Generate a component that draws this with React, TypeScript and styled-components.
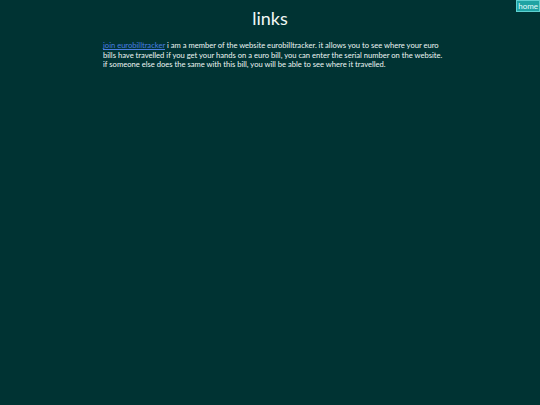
import React from "react";
import styled, { createGlobalStyle } from "styled-components";

const GlobalStyle = createGlobalStyle`
  html, body {
    margin: 0;
    padding: 0;
    background: #003333;
    height: 100%;
  }
  body {
    font-family: "Lato", "Noto Sans", sans-serif;
    color: #eef6f3;
  }
`;

const Page = styled.div`
  position: relative;
  min-height: 405px;
  padding-top: 7px;
  box-sizing: border-box;
`;

const HomeButton = styled.a`
  position: absolute;
  top: 0;
  right: 0;
  background: #1fa3a3;
  border: 1px solid #5fd0d0;
  color: #e6ffff;
  font-size: 8px;
  line-height: 10px;
  padding: 0 1px;
  text-decoration: none;
`;

const Title = styled.h1`
  margin: 0 0 12px;
  text-align: center;
  font-size: 18px;
  font-weight: 400;
  line-height: 22px;
  color: #f2f8f6;
`;

const Content = styled.div`
  width: 342px;
  margin: 0 0 0 103px;
  font-size: 7.6px;
  line-height: 9.5px;
`;

const Paragraph = styled.p`
  margin: 0;
`;

const Link = styled.a`
  color: #4a7fe0;
  text-decoration: underline;
`;

export default function App() {
  return (
    <>
      <GlobalStyle />
      <Page>
        <HomeButton href="#">home</HomeButton>
        <Title>links</Title>
        <Content>
          <Paragraph>
            <Link href="#">join eurobilltracker</Link> i am a member of the website eurobilltracker. it allows you to see where your euro bills have travelled if you get your hands on a euro bill, you can enter the serial number on the website. if someone else does the same with this bill, you will be able to see where it travelled.
          </Paragraph>
        </Content>
      </Page>
    </>
  );
}
